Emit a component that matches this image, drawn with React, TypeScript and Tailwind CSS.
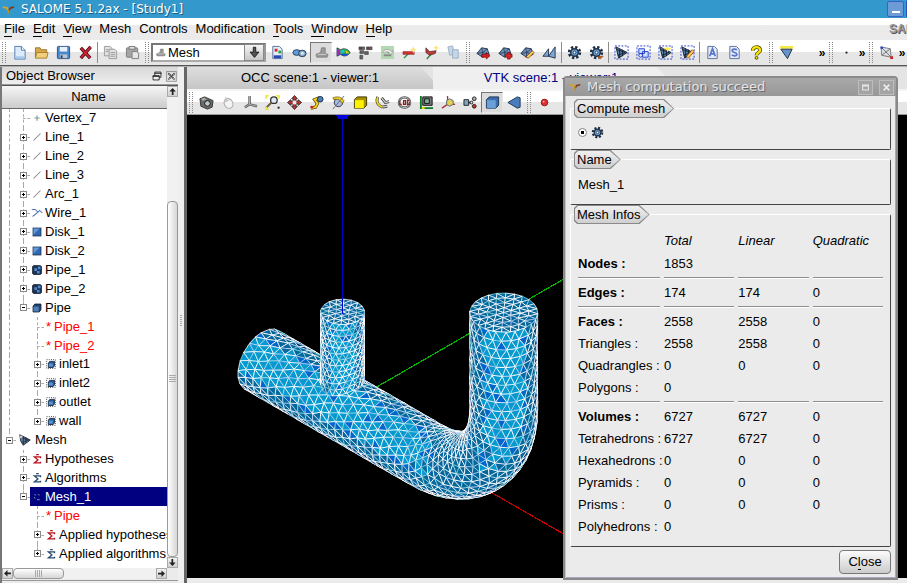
import React from "react";

type V3 = [number, number, number];
type Tri = { points: string; depth: number; fill: string; stroke: string };

/* ---------- mesh geometry ---------- */

const project = ([x, y, z]: V3): [number, number] => [
  342.5 + 0.707 * (x + y),
  406.5 + 0.408 * (x - y) - 0.816 * z,
];

let seed = 7;
const rand = () => {
  seed = (seed * 16807) % 2147483647;
  return seed / 2147483647;
};

function shade(facing: number) {
  const r = rand();
  if (facing > 0.7) return r < 0.08 ? "#0066cc" : "#0699cf";
  if (facing > 0.62) return r < 0.3 ? "#0066cc" : r < 0.75 ? "#0699cf" : "#066aa0";
  if (facing > 0.3) return "#05669c";
  return "#033f70";
}

function makeTri(a: V3, b: V3, c: V3, facing: number): Tri {
  const depth = (a[0] + b[0] + c[0] - a[1] - b[1] - c[1] + a[2] + b[2] + c[2]) / 3;
  const points = [a, b, c]
    .map(project)
    .map((p) => p[0].toFixed(1) + "," + p[1].toFixed(1))
    .join(" ");
  const r = rand();
  return {
    points,
    depth,
    fill: shade(facing),
    stroke: r < 0.12 ? "#7fd0d8" : r < 0.3 ? "#a9c8f0" : "#ffffff",
  };
}

type Ring = { p: V3; n: V3 }[];

function skin(rings: Ring[]): Tri[] {
  const out: Tri[] = [];
  const add = (a: Ring[0], b: Ring[0], c: Ring[0]) => {
    const f =
      (a.n[0] + b.n[0] + c.n[0] - a.n[1] - b.n[1] - c.n[1] + a.n[2] + b.n[2] + c.n[2]) /
      (3 * 1.732);
    if (f > -0.02) out.push(makeTri(a.p, b.p, c.p, f));
  };
  for (let i = 0; i < rings.length - 1; i++) {
    const A = rings[i];
    const B = rings[i + 1];
    const n = A.length;
    for (let j = 0; j < n; j++) {
      const k = (j + 1) % n;
      if (i % 2 === 0) {
        add(A[j], A[k], B[j]);
        add(B[j], B[k], A[k]);
      } else {
        add(A[j], B[j], B[k]);
        add(A[j], A[k], B[k]);
      }
    }
  }
  return out;
}

function cap(cx: number, cz: number, R: number, levels: number): Tri[] {
  const out: Tri[] = [];
  const at = (l: number, j: number): V3 => {
    const n = Math.max(1, l * 6);
    const t = ((j % n) / n) * Math.PI * 2 + 0.2;
    const r = (R * l) / levels;
    return [cx + r * Math.cos(t), r * Math.sin(t), cz];
  };
  for (let l = 1; l <= levels; l++) {
    for (let s = 0; s < 6; s++) {
      for (let k = 0; k < l; k++) {
        const inner = l === 1 ? at(0, 0) : at(l - 1, s * (l - 1) + k);
        out.push(makeTri(at(l, s * l + k), at(l, s * l + k + 1), inner, 0.577));
        if (k < l - 1) {
          out.push(
            makeTri(at(l, s * l + k + 1), inner, at(l - 1, s * (l - 1) + k + 1), 0.577),
          );
        }
      }
    }
  }
  return out;
}

function mainPipe(): Tri[] {
  const R = 34;
  const N = 22;
  const X = 228;
  const RHO = 110;
  const TOP = 229;
  const START = -114;
  const rings: Ring[] = [];
  const ring = (c: V3, phi: number) => {
    const i = rings.length;
    const r: Ring = [];
    for (let j = 0; j < N; j++) {
      const t = ((j + (i % 2) * 0.5 + (rand() - 0.5) * 0.25) / N) * Math.PI * 2;
      const n: V3 = [-Math.sin(phi) * Math.cos(t), Math.sin(t), Math.cos(phi) * Math.cos(t)];
      r.push({ n, p: [c[0] + R * n[0], c[1] + R * n[1], c[2] + R * n[2]] });
    }
    rings.push(r);
  };
  const straight = X - RHO - START;
  const na = 22;
  for (let i = 0; i < na; i++) ring([START + (straight * i) / na, 0, 0], 0);
  const nb = 18;
  for (let i = 0; i < nb; i++) {
    const phi = (Math.PI / 2) * (i / nb);
    ring([X - RHO + RHO * Math.sin(phi), 0, RHO - RHO * Math.cos(phi)], phi);
  }
  const nc = 11;
  for (let i = 0; i <= nc; i++) ring([X, 0, RHO + ((TOP - RHO) * i) / nc], Math.PI / 2);
  return [...skin(rings), ...cap(X, TOP, R, 4)].sort((a, b) => a.depth - b.depth);
}

function branchPipe(): Tri[] {
  const R = 22;
  const N = 20;
  const TOP = 116;
  const rings: Ring[] = [];
  const m = 12;
  for (let i = 0; i <= m; i++) {
    const r: Ring = [];
    for (let j = 0; j < N; j++) {
      const t = ((j + (i % 2) * 0.5) / N) * Math.PI * 2;
      const n: V3 = [Math.cos(t), Math.sin(t), 0];
      const base = Math.sqrt(34 * 34 - (R * n[1]) ** 2);
      r.push({ n, p: [R * n[0], R * n[1], base + ((TOP - base) * i) / m] });
    }
    rings.push(r);
  }
  return [...skin(rings), ...cap(0, TOP, R, 3)];
}

const TRIANGLES = [...mainPipe(), ...branchPipe()];

function Scene() {
  return (
    <svg
      viewBox="187 115 720 464"
      className="block h-[464px] w-[720px] max-w-none shrink-0"
      role="img"
      aria-label="Pipe mesh"
      shapeRendering="crispEdges"
    >
      <path d="M342 407L700 200.500" stroke="#00b400" strokeWidth="1.200" />
      <path d="M342 407L700 612" stroke="#c80000" strokeWidth="1.200" />
      {TRIANGLES.map((t, i) => (
        <polygon
          key={i}
          points={t.points}
          fill={t.fill}
          stroke={t.stroke}
          strokeWidth="0.8"
          strokeLinejoin="round"
        />
      ))}
      <path d="M342.500 115V314" stroke="#0000d0" strokeWidth="1.400" />
      <path d="M336 115h13l-2 4h-9z" fill="#0000e0" />
    </svg>
  );
}

/* ---------- icons ---------- */

const gear = (
  <g>
    <circle cx="8" cy="8" r="5.600" fill="none" stroke="#1c2b3c" strokeWidth="3" strokeDasharray="2.400 2" />
    <circle cx="8" cy="8" r="4" fill="#6aa3dc" stroke="#21364e" strokeWidth="1.600" />
    <circle cx="8" cy="8" r="1.500" fill="#fff" stroke="#21364e" />
  </g>
);
const meshBlob = (
  <g>
    <path d="M1 9L6 3l6 1 2 6-7 3z" fill="#6f93bf" stroke="#26364e" />
    <path d="M1 9l6-1 7 2M6 3l1 5v5M12 4L7 8" fill="none" stroke="#26364e" strokeWidth=".8" />
  </g>
);
const meshWedge = (
  <g>
    <path d="M2 2l12 6-9 6z" fill="#5580ad" stroke="#16202e" />
    <path d="M3 5l9 3-8 3M6 4v9M9 5v7" fill="none" stroke="#121a26" strokeWidth=".9" />
  </g>
);
const dotted = (
  <rect x="1" y="1" width="14" height="14" fill="none" stroke="#2340d0" strokeDasharray="2 1.500" />
);
const greyPart = (
  <g>
    <path d="M8 3h4v6l3 1-1 3H3l-1-3 5-2z" fill="#9a9a9a" stroke="#707070" strokeWidth=".7" />
    <path d="M4 10h9" stroke="#ccc" />
  </g>
);
const cube = (
  <g>
    <path d="M1.500 5l3-3h10v9l-3 3h-10z" fill="#3c6dab" stroke="#1c3354" />
    <path d="M2 5.500h9.500V14H2z" fill="#6a9fd8" />
  </g>
);
const page = (
  <path d="M3 1.500h7l3 3v10H3z" fill="#e4ecf8" stroke="#5a6f96" />
);

const ICONS: Record<string, React.ReactNode> = {
  new: (
    <g>
      <path d="M3 1.500h7l4 4v9.500H3z" fill="#dcebfb" stroke="#4d77b0" />
      <path d="M10 1.500v4h4" fill="#fff" stroke="#4d77b0" />
      <path d="M4 12h9v2H4z" fill="#a8c9ee" />
    </g>
  ),
  open: (
    <g>
      <path d="M1.500 3h5l1 2h6v8h-12z" fill="#d8a94b" stroke="#9a7428" />
      <path d="M3 8h12l-1.500 6H1.500z" fill="#f2cf7c" stroke="#a67e2e" />
    </g>
  ),
  save: (
    <g>
      <rect x="1.500" y="1.500" width="13" height="13" rx="1" fill="#4a88cc" stroke="#234f86" />
      <path d="M4 2h8v5H4z" fill="#e8f0f8" />
      <path d="M4 10h8v4H4z" fill="#b9c6d4" />
      <path d="M5 11h2v3H5z" fill="#2b4468" />
    </g>
  ),
  delete: (
    <g>
      <path d="M3 3l10 11M13.500 2L3 14" stroke="#3c0c12" strokeWidth="3.600" />
      <path d="M3 3l10 11M13.500 2L3 14" stroke="#cf2236" strokeWidth="2" />
    </g>
  ),
  copy: (
    <g fill="#e2e2e2" stroke="#9a9a9a">
      <path d="M1.500 1.500h6l2 2v8h-8z" />
      <path d="M6.500 4.500h6l2 2v8h-8z" />
      <path d="M8 8h5M8 10h5M8 12h5M3 5h3M3 7h3" />
    </g>
  ),
  paste: (
    <g stroke="#7c7c7c">
      <rect x="1.500" y="3" width="12" height="10" rx="1" fill="#a5a5a5" />
      <rect x="4.500" y="1.500" width="6" height="3" fill="#ddd" />
      <path d="M7.500 7h5l2 2v5.500h-7z" fill="#e6e6e6" />
    </g>
  ),
  part: greyPart,
  study: (
    <g>
      {page}
      <rect x="5" y="4" width="3" height="3" fill="#d22" />
      <rect x="9" y="6" width="3" height="3" fill="#27a243" />
      <path d="M4 11h8v3H4z" fill="#2647b8" />
    </g>
  ),
  geom: (
    <g>
      <ellipse cx="5" cy="8" rx="4" ry="3" fill="#5ea0dc" stroke="#203850" />
      <ellipse cx="11" cy="9" rx="4" ry="3.500" fill="#86aad0" stroke="#203850" />
      <circle cx="11" cy="9" r="1.500" fill="#e8f0f8" />
    </g>
  ),
  post: (
    <g>
      <path d="M1 3v9l4-2c3 3 8 2 10-2-2-4-7-5-10-3z" fill="#2cb24c" stroke="#224" strokeWidth=".7" />
      <path d="M1.500 4l3 2v4l-3 1z" fill="#b01ec8" />
      <path d="M5 6l4-1-1 3-3 1z" fill="#1bc8e0" />
      <path d="M5 9.500l5-.5 3 1c-2 2-5 2-8 0z" fill="#1b4be0" />
      <path d="M10 5.500l4 2.500-3 1z" fill="#e8c21c" />
    </g>
  ),
  yacs: (
    <g fill="#666" stroke="#333" strokeWidth=".6">
      <path d="M1 2h6v3H1zM9 2h6v3H9zM2 6h4v3H2zM7 7h4v3H7zM2 11h3v4H2z" />
      <path d="M2 3h2v1H2zM10 3h2v1h-2z" fill="#d33" />
    </g>
  ),
  jobs: (
    <g>
      <rect x="1" y="1" width="14" height="14" fill="#b4d8b4" />
      <path d="M3 8c0-4 8-4 9-1l2-1-2 4-4-2h2c-2-1-4-1-5 0z" fill="#f1f1f1" stroke="#888" strokeWidth=".6" />
      <path d="M4 11h8" stroke="#888" strokeWidth="2" />
    </g>
  ),
  wand: (
    <g>
      <path d="M2 14l6-6" stroke="#2b8c39" strokeWidth="1.500" />
      <path d="M1 7h12v3H6L1 10z" fill="#d03030" stroke="#8c2a2a" strokeWidth=".6" />
      <path d="M12 1l1 3 3 1-3 1-1 3-1-3-3-1 3-1z" fill="#ffe27a" />
    </g>
  ),
  wand2: (
    <g>
      <path d="M3 15l6-7" stroke="#2b8c39" strokeWidth="1.500" />
      <path d="M2 3l4 4 7-1-1 3-6 2-4-3z" fill="#b83c3c" stroke="#4d2626" strokeWidth=".7" />
      <path d="M13 0l1 2 2 1-2 1-1 2-1-2-2-1 2-1z" fill="#ffe27a" />
    </g>
  ),
  pages: (
    <g fill="#c4d6ea" stroke="#9fb0c4">
      <path d="M2 2l5-1 2 8-5 2z" />
      <path d="M7 5h6v9H7z" />
    </g>
  ),
  meshNew: (
    <g>
      {meshBlob}
      <path d="M6 10h5V8l4 3.500-4 3.500v-2H6z" fill="#d81e1e" stroke="#6d0909" strokeWidth=".7" />
    </g>
  ),
  meshAdd: (
    <g>
      {meshBlob}
      <path d="M8 10h2V8h3v2h2v3h-2v2h-3v-2H8z" fill="#e02323" stroke="#6d0909" strokeWidth=".7" />
    </g>
  ),
  meshEdit: (
    <g>
      {meshBlob}
      <path d="M6 13l7-7 2 2-6 6z" fill="#f1d04a" stroke="#7e2222" strokeWidth=".7" />
    </g>
  ),
  meshCopy: (
    <g>
      <path d="M1 12l6-8v8l7-10v12l-7-2z" fill="#7fa7d3" stroke="#26364e" />
    </g>
  ),
  gear,
  gearAlt: (
    <g>
      {gear}
      <path d="M9 12h6l-3 3z" fill="#e0701c" stroke="#6a2f05" strokeWidth=".6" />
    </g>
  ),
  group: (
    <g>
      {dotted}
      {meshWedge}
    </g>
  ),
  groupGeom: (
    <g>
      {dotted}
      <path d="M3 4h6v5H3zM7 7h6v6H7z" fill="#cfe0ff" stroke="#2340d0" />
      <circle cx="5" cy="11" r="2" fill="none" stroke="#2340d0" />
    </g>
  ),
  groupStar: (
    <g>
      {dotted}
      {meshWedge}
      <path d="M10 0l1 3 4 1-4 1-1 3-1-3-4-1 4-1z" fill="#fff04a" />
    </g>
  ),
  groupEdit: (
    <g>
      {dotted}
      {meshWedge}
      <path d="M7 12l6-7 2 2-6 7z" fill="#f1d04a" stroke="#8a2020" strokeWidth=".7" />
    </g>
  ),
  letterA: (
    <g>
      {page}
      <path d="M5 12l3-8 3 8M6 9.500h4" fill="none" stroke="#5a74cc" strokeWidth="1.800" />
    </g>
  ),
  letterS: (
    <g>
      {page}
      <path d="M10.500 5.500c-1-1.500-5-1.500-5 .7 0 2.200 5 1.300 5 3.600 0 2.200-4 2.200-5.300.5" fill="none" stroke="#5a74cc" strokeWidth="1.800" />
    </g>
  ),
  help: (
    <g fill="none">
      <path d="M4 6c0-5 8-5 8-.5C12 8 8 8 8 11" stroke="#4a4200" strokeWidth="4" />
      <path d="M4 6c0-5 8-5 8-.5C12 8 8 8 8 11" stroke="#f5e400" strokeWidth="2.400" />
      <circle cx="8" cy="13.700" r="1.500" fill="#f5e400" stroke="#4a4200" />
    </g>
  ),
  filter: (
    <g>
      <path d="M1 2.500h14" stroke="#f5e94a" strokeWidth="3" />
      <path d="M2 4.500h12l-5 10z" fill="#6794c8" stroke="#1d2d44" />
    </g>
  ),
  dot: <circle cx="8" cy="8" r="1.200" fill="#222" />,
  select: (
    <g>
      <path d="M2 2l10 2 1 9-10-2zM2 2l11 11M12 4L3 11" fill="#d8dce4" stroke="#777" />
      <circle cx="3" cy="3" r="1.500" fill="#2a49c8" />
      <path d="M12 12h3v3h-3z" fill="#c22" />
    </g>
  ),
  camera: (
    <g>
      <path d="M1 4l5-2 9 4-1 7-5 2-7-3z" fill="#6a6a6a" stroke="#333" />
      <circle cx="9" cy="9" r="3" fill="#b9c9d4" stroke="#111" />
      <path d="M2 4l4-1 2 2-4 1z" fill="#aaa" />
    </g>
  ),
  mouse: (
    <g>
      <ellipse cx="8" cy="9" rx="4.500" ry="5.500" transform="rotate(-30 8 9)" fill="#f4f4f4" stroke="#aaa" />
      <path d="M3 8l6-3M5 2l1 5" stroke="#bbb" fill="none" />
    </g>
  ),
  trihedron: (
    <g>
      <path d="M7 1v9l-5 3M7 10l8 2" fill="none" stroke="#555" strokeWidth="2.600" />
      <path d="M7 1v9l-5 3M7 10l8 2" fill="none" stroke="#bbb" />
    </g>
  ),
  fit: (
    <g>
      <path d="M1 4V1h3M12 1h3v3M1 12v3h3" fill="none" stroke="#e8e000" strokeWidth="1.300" />
      <circle cx="9.500" cy="5.500" r="3.500" fill="#e0eaf2" stroke="#333" strokeWidth="1.400" />
      <path d="M7 8l-5 5" stroke="#6a5a3a" strokeWidth="2" />
      <path d="M13.500 12.500h2v2h-2z" fill="#111" />
    </g>
  ),
  pan: (
    <g>
      <path d="M8 .5l3 3.500H9.500v2.500H12V5l3.500 3-3.500 3V9.500H9.500V12H11l-3 3.500L5 12h1.500V9.500H4V11L.5 8 4 5v1.500h2.500V4H5z" fill="#b33" stroke="#222" strokeWidth=".9" />
      <path d="M6 6h4v4H6z" fill="#e8e8e8" />
    </g>
  ),
  rotatePoint: (
    <g>
      <path d="M2 14l5-1 2-4-3-4 5-2" fill="none" stroke="#554400" strokeWidth="3.400" />
      <path d="M2 14l5-1 2-4-3-4 5-2" fill="none" stroke="#f2d21a" strokeWidth="2" />
      <circle cx="12" cy="4.500" r="3" fill="#4d7fb8" stroke="#1b2d44" />
      <circle cx="3" cy="13" r="1.500" fill="#c22" />
    </g>
  ),
  rotateAxis: (
    <g>
      <circle cx="8" cy="8" r="4.500" fill="#a8b8e0" stroke="#334" />
      <path d="M2 3c5-2 9-1 12 3l-2 3c-2-4-5-5-9-4z" fill="#f2d21a" stroke="#554400" strokeWidth=".7" />
      <path d="M14 1L2 15" stroke="#667" />
    </g>
  ),
  front: (
    <g>
      <path d="M1.500 5l3-3h10v9l-3 3h-10z" fill="#a89000" stroke="#3b3300" />
      <path d="M2 5.500h9.500V14H2z" fill="#fff200" />
    </g>
  ),
  turn: (
    <g fill="none">
      <path d="M3 2c-2 5 0 9 5 11M7 3l4 5 4-1M8 13l5-1" stroke="#333" strokeWidth="3" />
      <path d="M3 2c-2 5 0 9 5 11" stroke="#f2d21a" strokeWidth="1.800" />
      <path d="M7 3l4 5 4-1M8 13l5-1" stroke="#ccc" strokeWidth="1.400" />
    </g>
  ),
  reset: (
    <g fill="none">
      <ellipse cx="8" cy="8" rx="6" ry="5.500" stroke="#444" strokeWidth="2.400" />
      <ellipse cx="8" cy="8" rx="6" ry="5.500" stroke="#c9c9c9" />
      <path d="M3 6v4h2M7 6h2v4H7zM13 6h-2v4h2V8" stroke="#822" strokeWidth="1.300" />
    </g>
  ),
  graduated: (
    <g>
      <path d="M2 1v13h13" stroke="#0a7a24" strokeWidth="2" fill="none" />
      <path d="M4 2h10v9H4z" fill="#777" stroke="#111" />
      <path d="M6 4h5v5H6z" fill="#7fb09a" stroke="#111" />
      <path d="M3 14h3" stroke="#e8e000" strokeWidth="2" />
    </g>
  ),
  ambient: (
    <g>
      <path d="M7 1v9l-6 4M7 10h8" stroke="#a33" strokeWidth="1.400" fill="none" />
      <path d="M6 6l3-2 4 2v4l-4 2-3-2z" fill="#e4cf52" stroke="#567" />
    </g>
  ),
  scaling: (
    <g stroke="#222">
      <path d="M1 5h5v6H1z" fill="#7ea4c8" />
      <path d="M6 8h4" strokeWidth="2" />
      <circle cx="12" cy="4" r="2" fill="#aaa" />
      <circle cx="12" cy="12" r="2" fill="#c33" />
      <circle cx="9" cy="8" r="1.500" fill="#ddd" />
    </g>
  ),
  solid: cube,
  cone: <path d="M1 8l10-6 3 1v10l-3 1z" fill="#4a7dbb" stroke="#1d3556" />,
  record: (
    <g>
      <circle cx="8" cy="8" r="3.500" fill="#e03030" stroke="#8a1515" />
      <circle cx="7" cy="7" r="1" fill="#ffb0b0" />
    </g>
  ),
  vertex: <path d="M8 5v6M5 8h6" stroke="#7c9a9a" strokeWidth="1.300" />,
  line: <path d="M4 12l8-8" stroke="#888" strokeWidth="1.200" />,
  wire: <path d="M2 4h4l3 3-6 5M9 7l2-2 3 3" fill="none" stroke="#5577bb" strokeWidth="1.200" />,
  face: (
    <g>
      <rect x="3.500" y="3.500" width="9" height="9" fill="#2f68b4" stroke="#18304e" />
      <path d="M4 4h7l-7 7z" fill="#5f97da" />
    </g>
  ),
  compound: (
    <g>
      <path d="M4 3h8l1 1v8l-1 1H4l-1-1V4z" fill="#1d3558" stroke="#111b2c" />
      <path d="M5 6h3v3H5zM9 4h3v3H9zM8 9h3v3H8z" fill="#5488cc" />
    </g>
  ),
  solidSmall: (
    <g>
      <path d="M3.500 6l2-2.500h7v6.500l-2 2.500h-7z" fill="#26436c" stroke="#111f33" />
      <path d="M4 6.500h6V12H4z" fill="#4c80bd" />
    </g>
  ),
  geomGroup: (
    <g>
      <rect x="3" y="3" width="10" height="10" fill="none" stroke="#222" strokeDasharray="1 1.500" />
      <path d="M5 7l1.500-2H12v5l-1.500 2H5z" fill="#2c5890" stroke="#142a48" />
      <path d="M5.500 7.500H10V11H5.500z" fill="#5b94d2" />
    </g>
  ),
  meshModule: (
    <g>
      <path d="M2 2l12 6-8 6L3 9z" fill="#5f7f9f" stroke="#1a2430" />
      <path d="M3 5l9 3-7 3M6 4v9M9 5v6" fill="none" stroke="#121a26" strokeWidth=".8" />
      <path d="M2 3h3v3H2z" fill="#ccc" />
    </g>
  ),
  hypo: <path d="M12 7V5.500H5L9 9l-4 3.500h7V11M7 3h3" fill="none" stroke="#b8101c" strokeWidth="1.500" />,
  algo: <path d="M12 7V5.500H5L9 9l-4 3.500h7V11M7 3h3" fill="none" stroke="#28486e" strokeWidth="1.500" />,
  meshObj: <path d="M5 5l2 1M9 5l2 1M5 8l1 2M8 11h3" stroke="#5a8a9a" strokeWidth="1.200" />,
  app: (
    <g>
      <path d="M1 4l6 1 2 4-2 1-2-3-4-1z" fill="#d9a326" />
      <path d="M15 4l-5 1-3 4 2 1 2-3 4-1z" fill="#7a3b22" />
      <path d="M7 8h2v5H7z" fill="#c18e22" />
    </g>
  ),
  restore: (
    <g fill="#eee" stroke="#222">
      <path d="M5.500 3.500h7v6h-7zM5 5h8" />
      <path d="M3.500 7.500h7v5h-7zM3 8.500h8" />
    </g>
  ),
  close: (
    <g fill="none" stroke="#333">
      <rect x="3" y="3" width="11" height="11" stroke="#888" />
      <path d="M5 5l7 7M12 5l-7 7" strokeWidth="2" strokeDasharray="1.500 .7" />
    </g>
  ),
  maximize: <path d="M4.500 5h7v6h-7zM4.500 6h7" fill="none" stroke="#e8e8e8" strokeWidth="1.300" />,
  cross: <path d="M4.500 4.500l7 7M11.500 4.500l-7 7" stroke="#ececec" strokeWidth="2" />,
  down: <path d="M6.500 1.500h3v6h4L8 14 2.500 7.500h4z" fill="#555" stroke="#111" />,
  arrow: <path d="M7 13h2.500V8H13L8 3 3.500 8H7z" fill="#222" />,
};

function Icon({ name, className = "size-4" }: { name: string; className?: string }) {
  return (
    <svg viewBox="0 0 16 16" className={"shrink-0 " + className} aria-hidden="true">
      {ICONS[name]}
    </svg>
  );
}

/* ---------- tool bars ---------- */

const Handle = () => (
  <span className="mx-0.5 h-[21px] w-1 shrink-0 border-x border-dotted border-[#888]" />
);
const Divider = () => <span className="mx-px h-[21px] w-px shrink-0 bg-[#8c8c8c]" />;
const More = () => (
  <button
    aria-label="More tools"
    className="w-2.5 shrink-0 text-center text-[12px] leading-4 font-bold"
  >
    »
  </button>
);

function Tool({ name, pressed = false }: { name: string; pressed?: boolean }) {
  return (
    <button
      aria-label={name}
      aria-pressed={pressed}
      className={
        "flex h-[21px] w-[22px] shrink-0 items-center justify-center " +
        (pressed ? "border border-[#e8e8e8] border-t-[#777] border-l-[#777] bg-[#dcdcdc]" : "")
      }
    >
      <Icon name={name} className="size-[15px]" />
    </button>
  );
}

const Tools = ({ names }: { names: string[] }) => (
  <>
    {names.map((n) => (
      <Tool key={n} name={n} />
    ))}
  </>
);

function MainToolbar() {
  return (
    <div className="flex h-[25px] shrink-0 items-center overflow-hidden bg-linear-to-b from-white from-50% to-[#e6e6e6] to-50%">
      <Handle />
      <Tools names={["new", "open", "save", "delete"]} />
      <Divider />
      <Tools names={["copy", "paste"]} />
      <Handle />
      <div className="relative flex h-[19px] w-[115px] shrink-0 items-center border-2 border-[#777] border-r-[#999] border-b-[#aaa] bg-white">
        <Icon name="part" className="ml-0.5 size-[11px]" />
        <select
          aria-label="Module"
          className="h-full min-w-0 flex-1 appearance-none bg-transparent pl-0.5 text-[13px] leading-4 outline-none"
        >
          <option>Mesh</option>
        </select>
        <span className="flex h-[17px] w-5 items-center justify-center border border-[#888] bg-linear-to-b from-[#f4f4f4] to-[#c8c8c8]">
          <Icon name="down" className="size-[13px]" />
        </span>
      </div>
      <Tools names={["study", "geom"]} />
      <Tool name="part" pressed />
      <Tools names={["post", "yacs", "jobs", "wand", "wand2", "pages"]} />
      <Handle />
      <Tools names={["meshNew", "meshAdd", "meshEdit", "meshCopy"]} />
      <Divider />
      <Tools names={["gear", "gearAlt"]} />
      <Divider />
      <Tools names={["group", "groupGeom", "groupStar", "groupEdit"]} />
      <Divider />
      <Tools names={["letterA", "letterS", "help"]} />
      <Handle />
      <Tool name="filter" />
      <span className="w-5 shrink-0" />
      <More />
      <Handle />
      <Tool name="dot" />
      <More />
      <Handle />
      <Tool name="select" />
      <More />
    </div>
  );
}

function ViewToolbar() {
  return (
    <div className="flex h-[24px] shrink-0 items-center overflow-hidden border-b border-[#999] bg-linear-to-b from-white from-50% to-[#e6e6e6] to-50%">
      <Handle />
      <Tools
        names={[
          "camera", "mouse", "trihedron", "fit", "pan", "rotatePoint", "rotateAxis",
          "front", "turn", "reset", "graduated", "ambient", "scaling",
        ]}
      />
      <Tool name="solid" pressed />
      <Tool name="cone" />
      <Handle />
      <Tool name="record" />
    </div>
  );
}

/* ---------- menu ---------- */

const MENUS: [string, boolean][] = [
  ["File", true],
  ["Edit", true],
  ["View", true],
  ["Mesh", false],
  ["Controls", false],
  ["Modification", false],
  ["Tools", true],
  ["Window", true],
  ["Help", true],
];

function MenuBar() {
  return (
    <nav className="flex h-[22px] shrink-0 items-center justify-between overflow-hidden bg-linear-to-b from-white from-30% to-[#ebebeb] to-30%">
      <div className="flex gap-2 pl-1">
        {MENUS.map(([label, key]) => (
          <button key={label} className="leading-4">
            {key ? (
              <>
                <span className="border-b border-black">{label[0]}</span>
                {label.slice(1)}
              </>
            ) : (
              label
            )}
          </button>
        ))}
      </div>
      <span className="w-[18px] overflow-hidden text-[12px] leading-3 font-bold text-[#9a9a9a] [text-shadow:1px_1px_0_#555]">
        SALOME
      </span>
    </nav>
  );
}

/* ---------- object browser ---------- */

type Row = {
  level: number;
  label: string;
  icon?: string;
  sign?: "+" | "-";
  rails: number[];
  last?: boolean;
  selected?: boolean;
};

const ROWS: Row[] = [
  { level: 1, label: "Vertex_7", icon: "vertex", rails: [0] },
  { level: 1, label: "Line_1", icon: "line", sign: "+", rails: [0] },
  { level: 1, label: "Line_2", icon: "line", sign: "+", rails: [0] },
  { level: 1, label: "Line_3", icon: "line", sign: "+", rails: [0] },
  { level: 1, label: "Arc_1", icon: "line", sign: "+", rails: [0] },
  { level: 1, label: "Wire_1", icon: "wire", sign: "+", rails: [0] },
  { level: 1, label: "Disk_1", icon: "face", sign: "+", rails: [0] },
  { level: 1, label: "Disk_2", icon: "face", sign: "+", rails: [0] },
  { level: 1, label: "Pipe_1", icon: "compound", sign: "+", rails: [0] },
  { level: 1, label: "Pipe_2", icon: "compound", sign: "+", rails: [0] },
  { level: 1, label: "Pipe", icon: "solidSmall", sign: "-", rails: [0], last: true },
  { level: 2, label: "Pipe_1", rails: [0] },
  { level: 2, label: "Pipe_2", rails: [0] },
  { level: 2, label: "inlet1", icon: "geomGroup", sign: "+", rails: [0] },
  { level: 2, label: "inlet2", icon: "geomGroup", sign: "+", rails: [0] },
  { level: 2, label: "outlet", icon: "geomGroup", sign: "+", rails: [0] },
  { level: 2, label: "wall", icon: "geomGroup", sign: "+", rails: [0], last: true },
  { level: 0, label: "Mesh", icon: "meshModule", sign: "-", rails: [], last: true },
  { level: 1, label: "Hypotheses", icon: "hypo", sign: "+", rails: [] },
  { level: 1, label: "Algorithms", icon: "algo", sign: "+", rails: [] },
  { level: 1, label: "Mesh_1", icon: "meshObj", sign: "-", rails: [], last: true, selected: true },
  { level: 2, label: "Pipe", rails: [] },
  { level: 2, label: "Applied hypotheses", icon: "hypo", sign: "+", rails: [] },
  { level: 2, label: "Applied algorithms", icon: "algo", sign: "+", rails: [], last: true },
];

function TreeRow({ row }: { row: Row }) {
  const indents = Array.from({ length: row.level }, (_, i) => i);
  return (
    <li className="flex min-h-0 flex-1 items-stretch whitespace-nowrap">
      {indents.map((i) => (
        <span key={i} className="flex w-3.5 shrink-0 justify-center">
          {row.rails.includes(i) && <span className="border-l border-dashed border-[#aaa]" />}
        </span>
      ))}
      <span className="relative flex w-3.5 shrink-0 items-center justify-center">
        <span
          className={
            "absolute top-0 left-1/2 border-l border-dashed border-[#aaa] " +
            (row.last ? "h-1/2" : "h-full")
          }
        />
        <span className="absolute top-1/2 left-1/2 w-1/2 border-t border-dashed border-[#aaa]" />
        {row.sign && (
          <svg
            viewBox="0 0 7 7"
            className="relative ml-px size-[7px]"
            shapeRendering="crispEdges"
            aria-hidden="true"
          >
            <path d="M0 0h7v7H0z" fill="#8a8a8a" />
            <path d="M1 1h5v5H1z" fill="#fff" />
            <path d={row.sign === "+" ? "M2 3h3v1H2zM3 2h1v3H3z" : "M2 3h3v1H2z"} fill="#000" />
          </svg>
        )}
      </span>
      <span
        className={
          "flex min-w-0 flex-1 items-center overflow-hidden " +
          (row.selected ? "bg-[#000080] text-white" : row.icon ? "" : "text-[#ff0000]")
        }
      >
        {row.icon ? (
          <span
            className={
              "mr-px flex shrink-0 items-center justify-center " +
              (row.level === 0 ? "w-[18px]" : "w-3.5")
            }
          >
            <Icon name={row.icon} className="size-3.5" />
          </span>
        ) : (
          <span className="w-2.5 shrink-0 pl-0.5">*</span>
        )}
        {row.label}
      </span>
    </li>
  );
}

function ScrollArrow({ turn }: { turn: string }) {
  return (
    <button
      aria-label="Scroll"
      className="flex size-[11px] shrink-0 items-center justify-center border border-[#aaa] bg-linear-to-b from-[#f2f2f2] to-[#cfcfcf]"
    >
      <Icon name="arrow" className={"size-[11px] " + turn} />
    </button>
  );
}

function ObjectBrowser() {
  return (
    <aside className="flex w-[178px] shrink-0 flex-col border-l-2 border-[#777] bg-[#ebebeb]">
      <header className="flex h-[18px] shrink-0 items-center border-b border-[#999] bg-linear-to-b from-[#d8d8d8] to-[#efefef] pl-1">
        <h2 className="flex-1">Object Browser</h2>
        <button aria-label="Detach" className="flex">
          <Icon name="restore" className="size-[14px]" />
        </button>
        <button aria-label="Close panel" className="flex">
          <Icon name="close" className="size-[14px]" />
        </button>
      </header>
      <div className="flex min-h-0 flex-1 border-t border-[#555]">
        <div className="flex min-w-0 flex-1 flex-col bg-white">
          <div className="flex h-[23px] shrink-0 items-center justify-center border-b border-[#666] bg-linear-to-b from-[#f6f6f6] to-[#cccccc] pl-2">
            Name
          </div>
          <ul className="flex min-h-0 flex-1 flex-col overflow-hidden">
            {ROWS.map((r, i) => (
              <TreeRow key={i} row={r} />
            ))}
          </ul>
          <div className="h-[5px] shrink-0" />
        </div>
        <div className="flex w-[11px] shrink-0 flex-col bg-[#f1f1f1]">
          <ScrollArrow turn="" />
          <div className="flex flex-1 flex-col pt-[104px]">
            <div className="flex flex-1 items-center justify-center rounded-sm border border-[#999] bg-linear-to-r from-white to-[#d6d6d6]">
              <span className="h-2 w-[7px] bg-[repeating-linear-gradient(#aaa_0_1px,transparent_1px_2px)]" />
            </div>
          </div>
          <ScrollArrow turn="rotate-180" />
        </div>
      </div>
      <div className="flex h-[12px] shrink-0 pr-[11px]">
        <ScrollArrow turn="-rotate-90" />
        <div className="flex h-[11px] flex-1 bg-[#f1f1f1]">
          <div className="flex w-[51px] items-center justify-center rounded-sm border border-[#999] bg-linear-to-b from-white to-[#d6d6d6]">
            <span className="h-[7px] w-2 bg-[repeating-linear-gradient(90deg,#aaa_0_1px,transparent_1px_2px)]" />
          </div>
        </div>
        <ScrollArrow turn="rotate-90" />
      </div>
      <div className="h-[3px] shrink-0 border-t border-[#999]" />
    </aside>
  );
}

/* ---------- dialog ---------- */

const HEAD = ["", "Total", "Linear", "Quadratic"];
const SECTIONS: string[][][] = [
  [["Nodes :", "1853", "", ""]],
  [["Edges :", "174", "174", "0"]],
  [
    ["Faces :", "2558", "2558", "0"],
    ["Triangles :", "2558", "2558", "0"],
    ["Quadrangles :", "0", "0", "0"],
    ["Polygons :", "0", "", ""],
  ],
  [
    ["Volumes :", "6727", "6727", "0"],
    ["Tetrahedrons :", "6727", "6727", "0"],
    ["Hexahedrons :", "0", "0", "0"],
    ["Pyramids :", "0", "0", "0"],
    ["Prisms :", "0", "0", "0"],
    ["Polyhedrons :", "0", "", ""],
  ],
];

function MeshTable() {
  return (
    <table className="mt-1.5 w-full table-fixed border-separate border-spacing-x-1 border-spacing-y-0 text-left">
      <colgroup>
        <col className="w-[82px]" />
        <col />
        <col />
        <col />
      </colgroup>
      <thead>
        <tr className="h-[22px]">
          {HEAD.map((h) => (
            <th key={h} className="p-0 font-normal italic">
              {h}
            </th>
          ))}
        </tr>
      </thead>
      {SECTIONS.map((rows, s) => (
        <tbody key={s}>
          {s > 0 && (
            <tr className="h-1.5" aria-hidden="true">
              {HEAD.map((h) => (
                <td key={h} className="p-0">
                  <div className="h-0.5 border-t border-b border-t-[#8e8e8e] border-b-white" />
                </td>
              ))}
            </tr>
          )}
          {rows.map((r, i) => (
            <tr key={r[0]} className={i === 0 ? "h-[23px]" : "h-[22px]"}>
              <th
                scope="row"
                className={"p-0 whitespace-nowrap " + (i === 0 ? "font-bold" : "font-normal")}
              >
                {r[0]}
              </th>
              <td className="p-0">{r[1]}</td>
              <td className="p-0">{r[2]}</td>
              <td className="p-0">{r[3]}</td>
            </tr>
          ))}
        </tbody>
      ))}
    </table>
  );
}

function Group({
  title,
  className,
  children,
}: {
  title: string;
  className: string;
  children: React.ReactNode;
}) {
  return (
    <fieldset
      className={
        "min-w-0 rounded-xs border border-t-white border-r-[#444] border-b-[#444] border-l-white px-[3px] " +
        className
      }
    >
      <legend className="bg-[#8a8a8a] p-px [clip-path:polygon(0_3px,3px_0,calc(100%-10px)_0,100%_50%,calc(100%-10px)_100%,3px_100%,0_calc(100%-3px))]">
        <span className="block bg-linear-to-b from-[#f0f0f0] to-[#cfcfcf] pr-[8px] pl-0.5 leading-[17px] [clip-path:polygon(0_3px,3px_0,calc(100%-10px)_0,100%_50%,calc(100%-10px)_100%,3px_100%,0_calc(100%-3px))]">
          {title}
        </span>
      </legend>
      {children}
    </fieldset>
  );
}

function Dialog() {
  return (
    <section
      role="dialog"
      aria-label="Mesh computation succeed"
      className="absolute top-[76px] right-[9px] flex w-[335px] flex-col rounded-t-sm border-2 border-[#8a8a8a] bg-[#ebebeb] shadow-[inset_1px_0_0_#c4c4c4,inset_-1px_-1px_0_#a8a8c0]"
    >
      <header className="flex h-[18px] shrink-0 items-center gap-1 bg-linear-to-b from-[#a9a9a9] to-[#979797] pr-0.5 pl-1">
        <Icon name="app" className="size-3" />
        <h2 className="flex-1 pl-0.5 font-['DejaVu_Sans',sans-serif] text-[13px] leading-4 text-[#e4e4e4] [text-shadow:1px_1px_0_#666]">
          Mesh computation succeed
        </h2>
        <button aria-label="Maximize" className="flex border border-[#bdbdbd] bg-[#a4a4a4]">
          <Icon name="maximize" className="size-[13px]" />
        </button>
        <button aria-label="Close window" className="ml-0.5 flex border border-[#bdbdbd] bg-[#a4a4a4]">
          <Icon name="cross" className="size-[13px]" />
        </button>
      </header>
      <div className="flex flex-col px-[5px] pt-[3px] pb-1">
        <Group title="Compute mesh" className="h-[51px]">
          <label className="flex items-center gap-1 pt-2 pl-1">
            <input
              type="radio"
              name="algo"
              defaultChecked
              aria-label="Compute"
              className="size-[9px] appearance-none rounded-full border border-[#888] bg-[radial-gradient(circle,#000_0_1.5px,#fff_2px)]"
            />
            <Icon name="gear" className="size-[13px]" />
          </label>
        </Group>
        <Group title="Name" className="h-[55px]">
          <div className="pt-2 pl-1 leading-4">Mesh_1</div>
        </Group>
        <Group title="Mesh Infos" className="h-[342px]">
          <MeshTable />
        </Group>
        <button className="mt-[3px] h-6 w-[52px] self-end rounded-sm border border-[#777] bg-linear-to-b from-[#fbfbfb] to-[#cccccc]">
          C<span className="border-b border-black">l</span>ose
        </button>
      </div>
    </section>
  );
}

/* ---------- page ---------- */

export default function App() {
  return (
    <div className="relative flex h-screen flex-col overflow-hidden bg-[#ebebeb] font-['Liberation_Sans',Arial,sans-serif] text-[13px] leading-4 text-black">
      <header className="flex h-[18px] shrink-0 items-center bg-[#3399cc] pl-0.5">
        <Icon name="app" className="size-[13px]" />
        <h1 className="flex-1 pl-1.5 font-['DejaVu_Sans',sans-serif] text-[12px] leading-4 text-white [text-shadow:1px_1px_0_#1d5f86]">
          SALOME 5.1.2ax - [Study1]
        </h1>
        <button
          aria-label="Minimize"
          className="mr-0.5 flex h-4 w-[17px] items-end justify-center rounded-xs border border-[#3a5fc8] bg-[#6d9bd6] pb-[3px]"
        >
          <span className="h-0.5 w-2 bg-white" />
        </button>
        <span className="h-4 w-px bg-[#2a50c0]" />
      </header>
      <MenuBar />
      <MainToolbar />
      <div className="h-0.5 shrink-0 border-t border-[#555] bg-[#b0b0b0]" />
      <main className="flex min-h-0 flex-1">
        <ObjectBrowser />
        <div className="flex w-1.5 shrink-0 items-center justify-center bg-[#efefef]">
          <span className="mb-2 h-3 w-0.5 bg-[repeating-linear-gradient(#aaa_0_1px,transparent_1px_2px)]" />
        </div>
        <section className="flex min-w-0 flex-1 flex-col border-l-3 border-[#666]">
          <div role="tablist" className="flex h-6 shrink-0 border-b-2 border-[#f4f4f4] bg-[#e4e4e4]">
            <button
              role="tab"
              aria-selected="false"
              className="w-[246px] bg-linear-to-b from-[#dedede] to-[#c6c6c6] [clip-path:polygon(0_0,calc(100%-12px)_0,100%_60%,100%_100%,0_100%)]"
            >
              OCC scene:1 - viewer:1
            </button>
            <button
              role="tab"
              aria-selected="true"
              className="w-[236px] bg-[#efefef] text-[#000080] [clip-path:polygon(0_0,calc(100%-12px)_0,100%_60%,100%_100%,0_100%)]"
            >
              VTK scene:1 - viewer:1
            </button>
          </div>
          <ViewToolbar />
          <div className="flex min-h-0 flex-1 overflow-hidden bg-black">
            <Scene />
          </div>
          <div className="h-[5px] shrink-0 bg-[#ebebeb]" />
        </section>
      </main>
      <Dialog />
    </div>
  );
}
